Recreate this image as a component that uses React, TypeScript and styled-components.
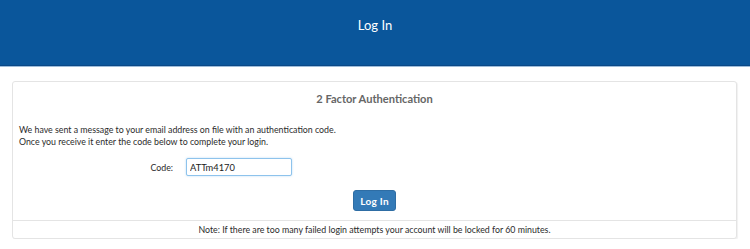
import React from "react";
import styled, { createGlobalStyle } from "styled-components";

const Global = createGlobalStyle`
  html, body { margin: 0; padding: 0; background: #fff; }
  body { font-family: Lato, "Open Sans", sans-serif; color: #333; }
  * { box-sizing: border-box; }
`;

const Header = styled.header`
  height: 66px;
  background: #0a569b;
  border-bottom: 1px solid #0a4886;
  box-shadow: 0 1px 0 #9dbddb;
  display: flex;
  justify-content: center;
  padding-top: 17px;
`;

const HeaderTitle = styled.h1`
  margin: 0;
  color: #fff;
  font-size: 13px;
  font-weight: 400;
  line-height: 16px;
`;

const Page = styled.main`
  padding: 15px 13px 0 12px;
`;

const Panel = styled.section`
  border: 1px solid #e4e4e4;
  border-radius: 3px;
  box-shadow: 1px 1px 1px rgba(0, 0, 0, 0.06);
  background: #fff;
`;

const PanelTitle = styled.h2`
  margin: 0;
  padding: 9px 0 0;
  text-align: center;
  font-size: 11.1px;
  font-weight: 700;
  color: #666;
  line-height: 16px;
`;

const PanelBody = styled.div`
  padding: 17px 6px 0;
`;

const Text = styled.p`
  margin: 0;
  font-size: 8.8px;
  line-height: 12px;
  color: #2b2b2b;
`;

const FormRow = styled.div`
  display: flex;
  align-items: center;
  margin-top: 10px;
`;

const Label = styled.label`
  width: 154px;
  text-align: right;
  font-size: 8.8px;
  color: #2b2b2b;
  margin-right: 13px;
`;

const Input = styled.input`
  width: 106px;
  height: 18px;
  border: 1px solid #8ec3ec;
  border-radius: 2px;
  padding: 0 3px;
  font-family: Lato, sans-serif;
  font-size: 9.3px;
  color: #222;
  outline: none;
  box-shadow: 0 0 2px rgba(102, 175, 233, 0.5);
`;

const ButtonRow = styled.div`
  display: flex;
  justify-content: center;
  padding: 14px 0 9px;
`;

const Button = styled.button`
  width: 43px;
  height: 21px;
  background: #337ab7;
  border: 1px solid #2e6da4;
  border-radius: 3px;
  color: #fff;
  font-family: Lato, sans-serif;
  font-weight: 700;
  font-size: 10px;
  letter-spacing: 0.3px;
  padding: 0;
`;

const PanelFooter = styled.footer`
  border-top: 1px solid #e4e4e4;
  height: 18px;
  display: flex;
  align-items: center;
  justify-content: center;
  font-size: 8.8px;
  color: #2b2b2b;
`;

export default function App() {
  return (
    <>
      <Global />
      <Header>
        <HeaderTitle>Log In</HeaderTitle>
      </Header>
      <Page>
        <Panel>
          <PanelTitle>2 Factor Authentication</PanelTitle>
          <PanelBody>
            <Text>We have sent a message to your email address on file with an authentication code.</Text>
            <Text>Once you receive it enter the code below to complete your login.</Text>
            <FormRow>
              <Label htmlFor="code">Code:</Label>
              <Input id="code" defaultValue="ATTm4170" />
            </FormRow>
            <ButtonRow>
              <Button>Log In</Button>
            </ButtonRow>
          </PanelBody>
          <PanelFooter>Note: If there are too many failed login attempts your account will be locked for 60 minutes.</PanelFooter>
        </Panel>
      </Page>
    </>
  );
}
